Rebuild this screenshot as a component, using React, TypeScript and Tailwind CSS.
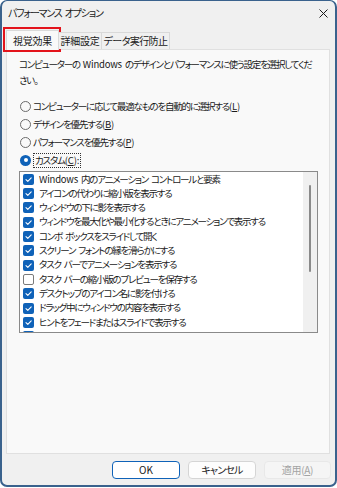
import React from "react";

const P = ({ children }: { children: React.ReactNode }) => (
  <span className="tracking-[-0.2px]">{children}</span>
);

const items: { label: React.ReactNode; key: string; checked: boolean }[] = [
  {
    key: "1",
    label: (
      <>
        <P>Windows</P> 内のアニメーション コントロールと要素
      </>
    ),
    checked: true,
  },
  { key: "2", label: "アイコンの代わりに縮小版を表示する", checked: true },
  { key: "3", label: "ウィンドウの下に影を表示する", checked: true },
  { key: "4", label: "ウィンドウを最大化や最小化するときにアニメーションで表示する", checked: true },
  { key: "5", label: "コンボ ボックスをスライドして開く", checked: true },
  { key: "6", label: "スクリーン フォントの縁を滑らかにする", checked: true },
  { key: "7", label: "タスク バーでアニメーションを表示する", checked: true },
  { key: "8", label: "タスク バーの縮小版のプレビューを保存する", checked: false },
  { key: "9", label: "デスクトップのアイコン名に影を付ける", checked: true },
  { key: "10", label: "ドラッグ中にウィンドウの内容を表示する", checked: true },
  { key: "11", label: "ヒントをフェードまたはスライドで表示する", checked: true },
  { key: "12", label: "マウス ポインターの下に影を表示する", checked: true },
];

function CheckBox({ checked }: { checked: boolean }) {
  if (!checked) {
    return <div className="w-[11px] h-[11px] rounded-[2px] border border-[#7a7a7a] bg-white shrink-0" />;
  }
  return (
    <div className="w-[11px] h-[11px] rounded-[2px] bg-[#0f62b8] shrink-0 flex items-center justify-center">
      <svg width="9" height="9" viewBox="0 0 9 9">
        <path d="M2 4.7 L3.8 6.4 L7.2 2.8" stroke="white" strokeWidth="1.1" fill="none" strokeLinecap="round" strokeLinejoin="round" />
      </svg>
    </div>
  );
}

function Radio({ selected }: { selected?: boolean }) {
  if (selected) {
    return (
      <div className="w-[11px] h-[11px] rounded-full bg-[#0f62b8] flex items-center justify-center shrink-0">
        <div className="w-[4px] h-[4px] rounded-full bg-white" />
      </div>
    );
  }
  return <div className="w-[11px] h-[11px] rounded-full border border-[#6b6b6b] bg-[#f9f9f9] shrink-0" />;
}

function RadioRow({ children, selected }: { children: React.ReactNode; selected?: boolean }) {
  return (
    <div className="h-[17.8px] flex items-center gap-[2px] pl-[1px] whitespace-nowrap">
      <Radio selected={selected} />
      {children}
    </div>
  );
}

function Key({ k }: { k: string }) {
  return (
    <P>
      (<span className="underline">{k}</span>)
    </P>
  );
}

export default function App() {
  return (
    <div className="w-[337px] h-[488px] bg-white relative font-['Noto_Sans_CJK_JP',sans-serif] [font-feature-settings:'palt'] text-[9.5px] tracking-[-1.2px] [word-spacing:2px] text-[#1a1a1a]">
      <div className="w-[337px] h-[487px] bg-[#f0f0f0] border-x-2 border-b-2 border-t border-[#3a628d] rounded-[7px] flex flex-col overflow-hidden">
        {/* title bar */}
        <div className="h-[24px] shrink-0 flex items-center justify-between pl-[6px] pr-[6px]">
          <span className="leading-none whitespace-nowrap text-[10px]">パフォーマンス オプション</span>
          <svg width="9" height="9" viewBox="0 0 9 9" className="mr-[1px]">
            <path d="M0.5 0.5 L8.5 8.5 M8.5 0.5 L0.5 8.5" stroke="#1a1a1a" strokeWidth="1" />
          </svg>
        </div>

        {/* tabs */}
        <div className="h-[24px] shrink-0 flex items-end pl-[4px] relative z-10 whitespace-nowrap text-[10px]">
          <div className="w-[53px] h-[20px] -mb-px bg-[#f9f9f9] border border-b-0 border-[#d9d9d9] flex items-center justify-center leading-none tracking-[-0.3px]">
            視覚効果
          </div>
          <div className="w-[43px] h-[17px] bg-[#f0f0f0] border-t border-r border-[#d9d9d9] flex items-center justify-center leading-none tracking-[-0.3px]">
            詳細設定
          </div>
          <div className="w-[68px] h-[17px] bg-[#f0f0f0] border-t border-r border-[#d9d9d9] flex items-center justify-center leading-none tracking-[-0.6px]">
            データ実行防止
          </div>
        </div>

        {/* panel */}
        <div className="mx-[4px] mr-[5px] h-[405px] shrink-0 bg-[#f9f9f9] border border-[#e0e0e0] pl-[12px] pr-[10px] pt-[6px] flex flex-col">
          <div className="leading-[16px] whitespace-nowrap">
            <div>
              コンピューターの <P>Windows</P> のデザインとパフォーマンスに使う設定を選択してくだ
            </div>
            <div>さい。</div>
          </div>
          <div className="mt-[10px] flex flex-col leading-none">
            <RadioRow>
              <span>
                コンピューターに応じて最適なものを自動的に選択する<Key k="L" />
              </span>
            </RadioRow>
            <RadioRow>
              <span>
                デザインを優先する<Key k="B" />
              </span>
            </RadioRow>
            <RadioRow>
              <span>
                パフォーマンスを優先する<Key k="P" />
              </span>
            </RadioRow>
            <RadioRow selected>
              <span className="border border-dotted border-[#333] px-[1px] py-[2px]">
                カスタム<Key k="C" />
                <P>:</P>
              </span>
            </RadioRow>
          </div>

          {/* list */}
          <div className="mt-[2px] w-[299px] h-[162px] bg-white border border-[#8a8a8a] flex overflow-hidden">
            <div className="flex-1 pl-[3px] overflow-hidden">
              {items.map((it) => (
                <div key={it.key} className="h-[14.3px] flex items-center gap-[5px] whitespace-nowrap leading-none">
                  <CheckBox checked={it.checked} />
                  <span>{it.label}</span>
                </div>
              ))}
            </div>
            <div className="w-[14px] h-full bg-[#f0f0f0] flex justify-center pt-[13px]">
              <div className="w-[2px] h-[87px] rounded-full bg-[#8a8a8a]" />
            </div>
          </div>
        </div>

        {/* buttons */}
        <div className="flex justify-end gap-[8px] pr-[4px] mt-[7px]">
          <button className="w-[68px] h-[18px] bg-white border border-[#0f62b8] rounded-[4px] leading-none text-[10px] tracking-[0px]">
            OK
          </button>
          <button className="w-[68px] h-[18px] bg-[#fdfdfd] border border-[#d5d5d5] rounded-[4px] leading-none text-[10px] tracking-[-0.8px]">
            キャンセル
          </button>
          <button className="w-[67px] h-[18px] bg-[#f5f5f5] border border-[#e8e8e8] rounded-[4px] leading-none text-[10px] text-[#a3a3a3] tracking-[-0.3px]">
            適用(<span className="underline">A</span>)
          </button>
        </div>
      </div>

      {/* red annotation */}
      <div className="absolute left-[3px] top-[27px] w-[58px] h-[25px] border-2 border-[#e3131b] pointer-events-none" />
    </div>
  );
}
